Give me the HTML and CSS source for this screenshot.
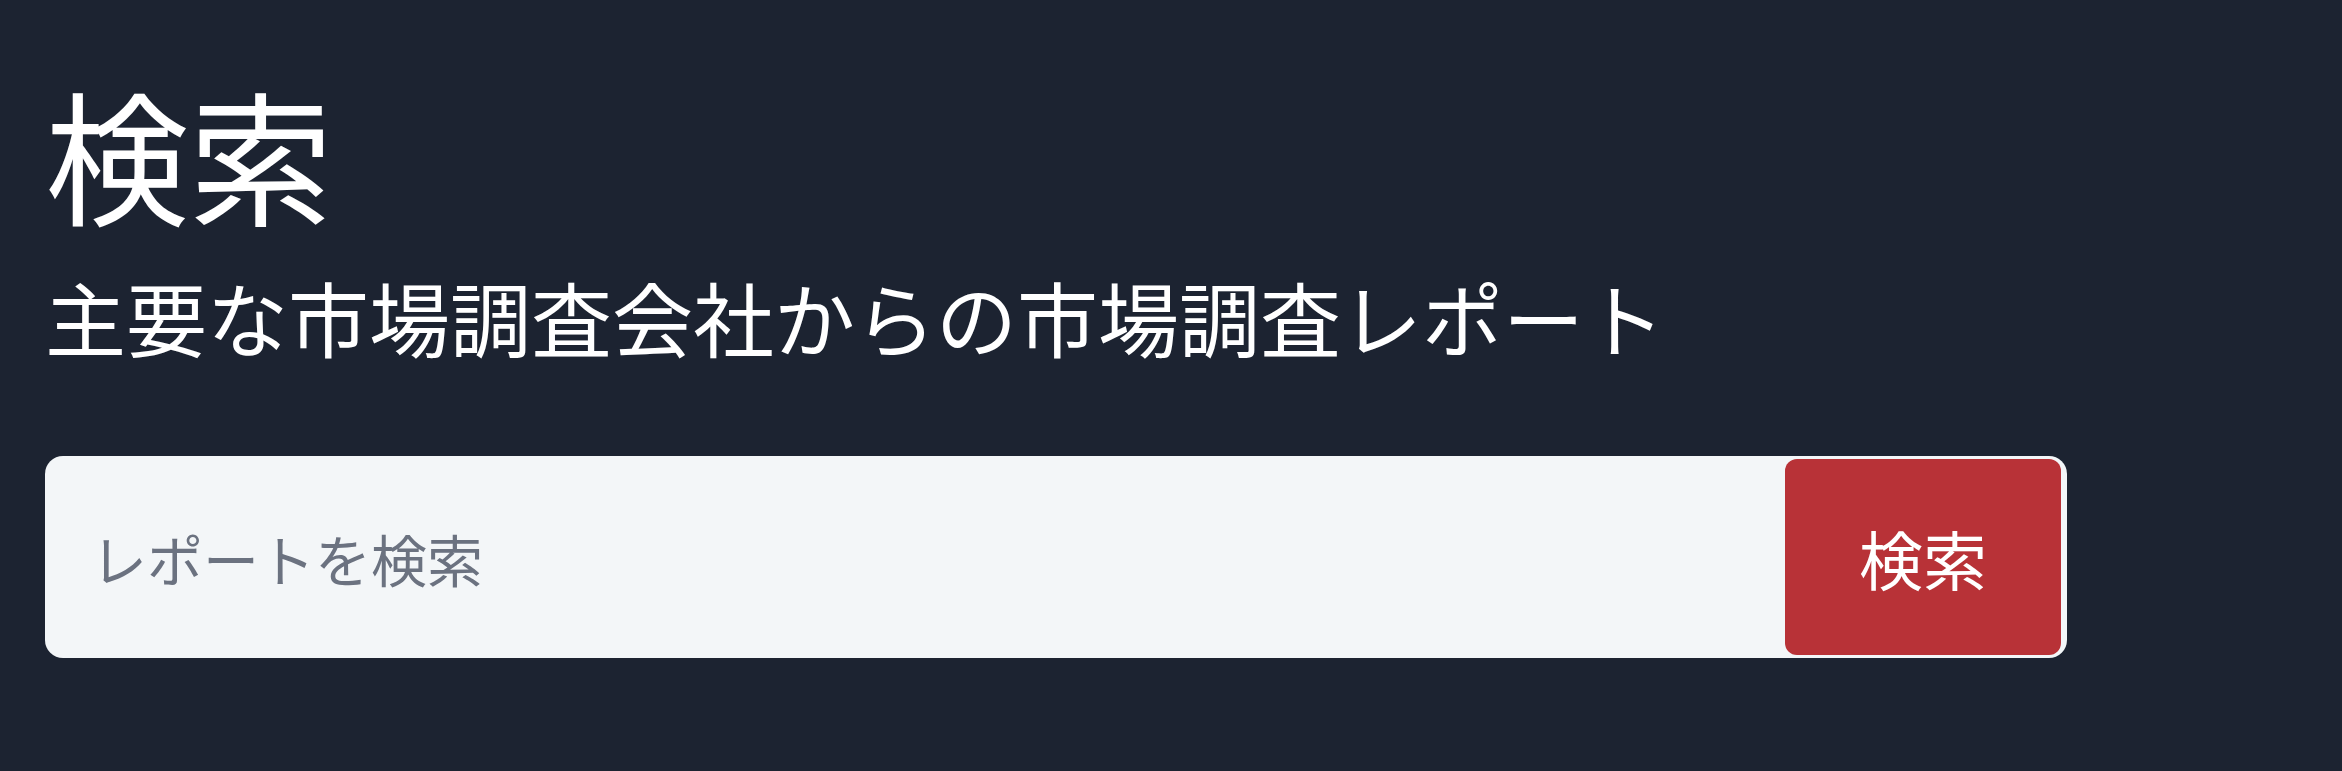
FILE: index.html
```html
<!DOCTYPE html>
<html lang="ja">

<head>
<meta charset="utf-8">
<title>検索</title>
<link rel="stylesheet" href="styles.css">
</head>

<body>
    <!-- search header with title, lead text and the report search form -->
    <section class="hero">
        <h1 class="hero-title">検索</h1>
        <p class="hero-lead">主要な市場調査会社からの市場調査レポート</p>

        <form class="search" onsubmit="return false;">
            <input class="search-input" type="text" placeholder="レポートを検索">
            <button class="search-button" type="submit">検索</button>
        </form>
    </section>
</body>

</html>
```

FILE: styles.css
```css
body{
    margin: 0;
    min-height: 100vh;
    background-color: #1c2331;
    color: #fff;
    font-family: "Noto Sans CJK JP", "Noto Sans", sans-serif;
}

.hero{
    padding: 80px 45px 0;
}

.hero-title{
    margin: 0;
    font-size: 144px;
    font-weight: 400;
    line-height: 1;
}

.hero-lead{
    margin: 51px 0 0;
    font-size: 81px;
    line-height: 1;
}

.search{
    display: flex;
    width: 2022px;
    height: 202px;
    box-sizing: border-box;
    margin-top: 100px;
    padding: 3px 6px 3px 0;
    background-color: #f3f6f8;
    border-radius: 18px;
}

.search-input{
    flex: 1;
    min-width: 0;
    padding: 0 0 0 46px;
    border: 0;
    outline: none;
    background: transparent;
    font-family: inherit;
    font-size: 56px;
    color: #1f2937;
}

.search-input::placeholder{
    color: #6b7280;
}

.search-button{
    width: 276px;
    border: 0;
    border-radius: 12px;
    background-color: #b83237;
    color: #fff;
    font-family: inherit;
    font-size: 64px;
    cursor: pointer;
}
```
